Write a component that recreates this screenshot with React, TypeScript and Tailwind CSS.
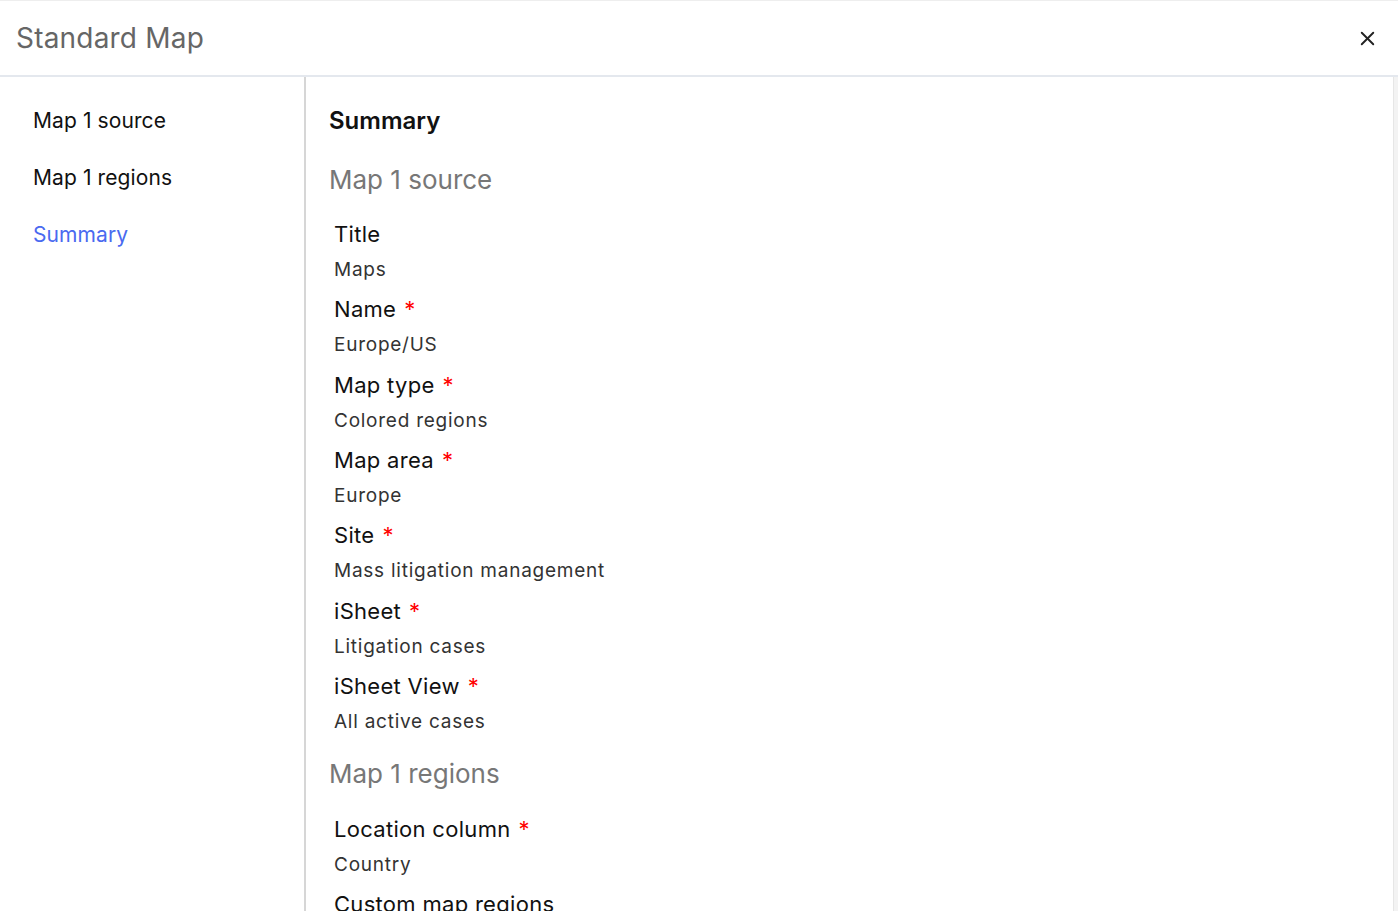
import { X } from "lucide-react";

type Field = { label: string; value: string; required?: boolean };

const sourceFields: Field[] = [
  { label: "Title", value: "Maps" },
  { label: "Name", value: "Europe/US", required: true },
  { label: "Map type", value: "Colored regions", required: true },
  { label: "Map area", value: "Europe", required: true },
  { label: "Site", value: "Mass litigation management", required: true },
  { label: "iSheet", value: "Litigation cases", required: true },
  { label: "iSheet View", value: "All active cases", required: true },
];

const regionFields: Field[] = [
  { label: "Location column", value: "Country", required: true },
  { label: "Custom map regions", value: "Europe" },
];

const steps = ["Map 1 source", "Map 1 regions", "Summary"];

const FieldRow = ({ field, first }: { field: Field; first?: boolean }) => (
  <div className={first ? "pl-[5px]" : "pl-[5px] mt-[11.33px]"}>
    <div className="text-[22px] leading-[30px] tracking-[0.3px] text-[#111]">
      {field.label}
      {field.required && <span className="ml-[8px] text-[#f00]">*</span>}
    </div>
    <div className="mt-[8px] text-[19px] leading-[26px] tracking-[0.75px] text-[#333]">{field.value}</div>
  </div>
);

export default function App() {
  return (
    <div
      className="h-screen flex flex-col bg-white border-t border-[#eeeeee] overflow-hidden"
      style={{ fontFamily: "Inter, 'Noto Sans', sans-serif" }}
    >
      <div className="h-[76px] shrink-0 flex items-center justify-between pl-[16px] pr-[19px] border-b-2 border-[#e4e8ee]">
        <h1 className="text-[28px] text-[#666] tracking-[0.2px]">Standard Map</h1>
        <X size={23} strokeWidth={2} className="text-[#222]" />
      </div>
      <div className="flex flex-1 min-h-0">
        <div className="w-[306px] shrink-0 border-r-2 border-[#d6d6d6] pt-[30px] pl-[33px] flex flex-col gap-[29px]">
          {steps.map((s, i) => (
            <div
              key={s}
              className={
                i === 2
                  ? "text-[21px] leading-[28px] tracking-[0.1px] text-[#4a6af0]"
                  : "text-[21px] leading-[28px] tracking-[0.1px] text-[#111]"
              }
            >
              {s}
            </div>
          ))}
        </div>
        <div className="flex-1 min-w-0 pl-[23px] pt-[28px]">
          <h2 className="text-[24px] leading-[32px] font-semibold text-[#111]">Summary</h2>
          <h3 className="mt-[26px] text-[26px] leading-[34px] text-[#777]">Map 1 source</h3>
          <div className="mt-[22px]">
            {sourceFields.map((f, i) => (
              <FieldRow key={f.label} field={f} first={i === 0} />
            ))}
          </div>
          <h3 className="mt-[22px] text-[26px] leading-[34px] text-[#777]">Map 1 regions</h3>
          <div className="mt-[23px]">
            {regionFields.map((f, i) => (
              <FieldRow key={f.label} field={f} first={i === 0} />
            ))}
          </div>
        </div>
        <div className="w-[5px] shrink-0 bg-[#f3f3f3] border-l border-[#e6e6e6]" />
      </div>
    </div>
  );
}
